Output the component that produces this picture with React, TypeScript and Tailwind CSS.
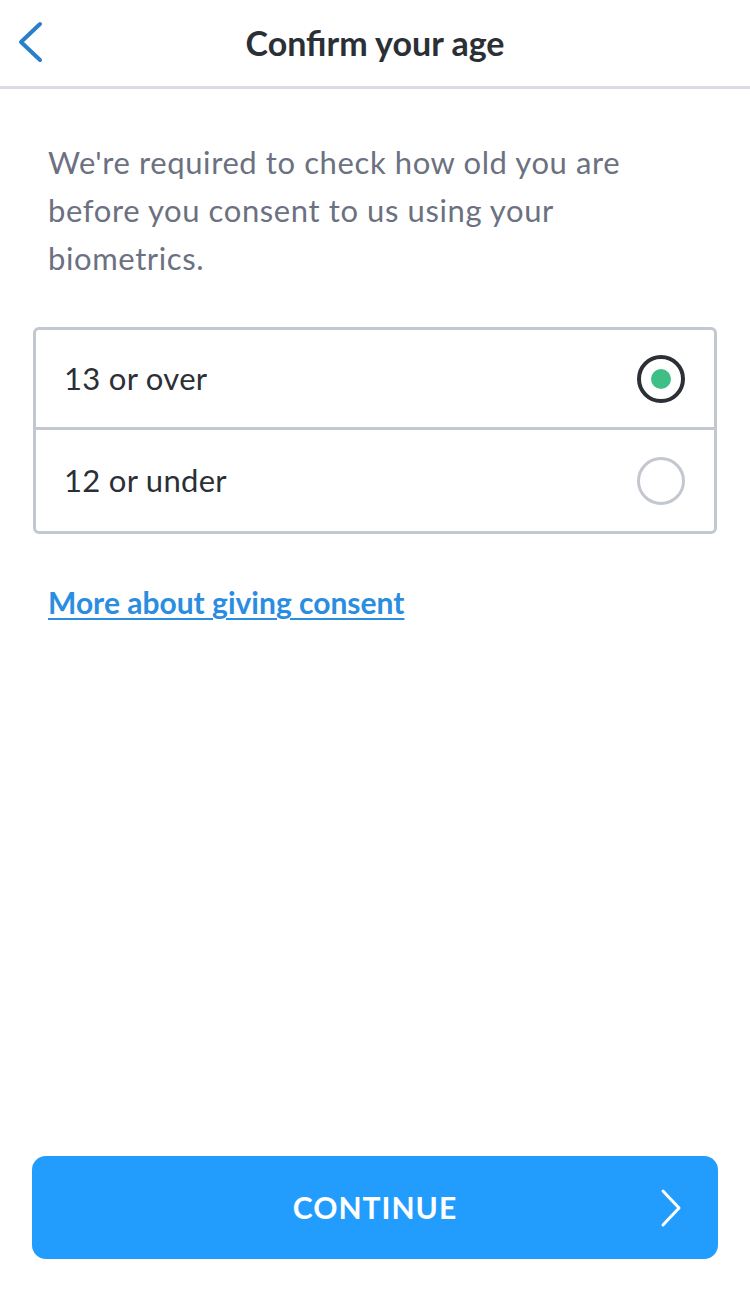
type Option = { label: string; selected: boolean };

const options: Option[] = [
  { label: "13 or over", selected: true },
  { label: "12 or under", selected: false },
];

function Radio({ selected }: { selected: boolean }) {
  if (selected) {
    return (
      <span className="flex h-[48px] w-[48px] items-center justify-center rounded-full border-[4px] border-[#2b2f36]">
        <span className="h-[20px] w-[20px] rounded-full bg-[#3dbf85]" />
      </span>
    );
  }
  return <span className="h-[48px] w-[48px] rounded-full border-[3px] border-[#c3c7cf]" />;
}

export default function App() {
  return (
    <div className="flex h-[1292px] w-[750px] flex-col bg-white font-['Lato','Noto_Sans',sans-serif]">
      {/* header */}
      <header className="relative flex h-[89px] items-center justify-center border-b-[3px] border-[#d9dce3]">
        <button className="absolute left-[16px] top-[21px] text-[#2a7fc9]" aria-label="Back">
          <svg width="28" height="42" viewBox="0 0 28 42" fill="none" aria-hidden="true">
            <path d="M24 3L5 21l19 18" stroke="currentColor" strokeWidth="4" strokeLinecap="round" strokeLinejoin="round" />
          </svg>
        </button>
        <h1 className="pb-[1px] text-[34px] font-bold tracking-[0px] text-[#2b2f36]">Confirm your age</h1>
      </header>

      <main className="flex flex-1 flex-col px-[33px] pt-[49px]">
        <p className="px-[15px] text-[31px] leading-[48px] tracking-[0.6px] text-[#6b7180]">
          We're required to check how old you are
          <br />
          before you consent to us using your
          <br />
          biometrics.
        </p>

        <div className="mt-[45px] overflow-hidden rounded-[6px] border-[3px] border-[#c3c7cf]">
          {options.map((o, i) => (
            <div
              key={o.label}
              className={
                "flex items-center justify-between pl-[28px] pr-[29px] " +
                (i > 0 ? "h-[104px] border-t-[3px] border-[#c3c7cf]" : "h-[97px]")
              }
            >
              <span className="text-[31px] tracking-[0.3px] text-[#2b2f36]">{o.label}</span>
              <Radio selected={o.selected} />
            </div>
          ))}
        </div>

        <a
          href="#consent"
          className="mt-[46px] self-start px-[15px] text-[30px] font-bold text-[#2a8de0] underline decoration-[2px] underline-offset-[4px]"
        >
          More about giving consent
        </a>

        <div className="flex-1" />

        <button className="relative mb-[33px] -ml-[1px] flex h-[103px] w-[686px] items-center justify-center rounded-[14px] bg-[#239dfd] text-white">
          <span className="text-[30px] font-bold tracking-[1px]">CONTINUE</span>
          <svg className="absolute right-[36px]" width="22" height="40" viewBox="0 0 22 40" fill="none" aria-hidden="true">
            <path d="M3 3l16 17L3 37" stroke="currentColor" strokeWidth="3" strokeLinecap="round" strokeLinejoin="round" />
          </svg>
        </button>
      </main>
    </div>
  );
}
